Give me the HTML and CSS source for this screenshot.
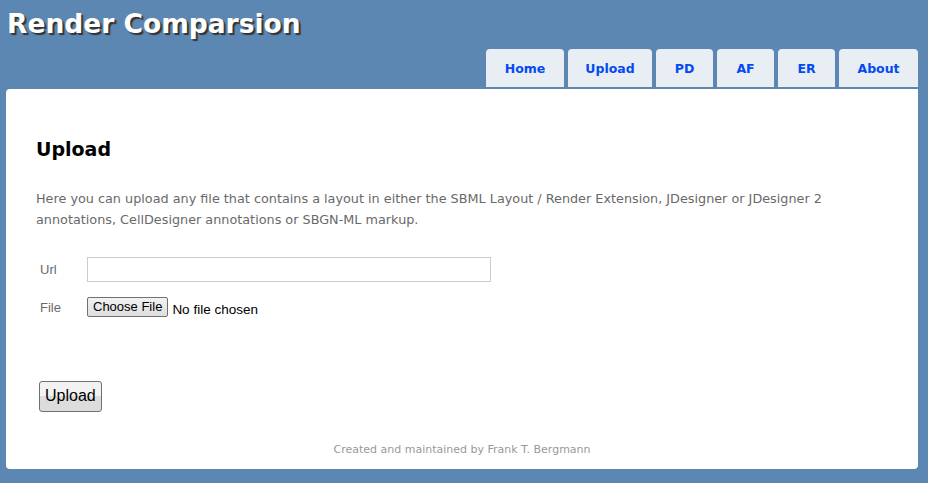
FILE: index.html
```html
<!DOCTYPE html>
<html lang="en">

<head>
    <meta charset="UTF-8">
    <title>Render Comparsion - Upload</title>
    <link rel="stylesheet" href="styles.css">
</head>

<body>
    <div class="page">
        <header class="header">
            <h1 class="title">Render Comparsion</h1>
            <ul class="menu">
                <li><a href="#">Home</a></li>
                <li><a href="#">Upload</a></li>
                <li><a href="#">PD</a></li>
                <li><a href="#">AF</a></li>
                <li><a href="#">ER</a></li>
                <li><a href="#">About</a></li>
            </ul>
        </header>

        <section class="main">
            <h2>Upload</h2>
            <p class="intro">Here you can upload any file that contains a layout in either the SBML Layout / Render Extension, JDesigner or JDesigner 2 annotations, CellDesigner annotations or SBGN-ML markup.</p>

            <form class="upload-form">
                <div class="row">
                    <label class="label" for="url">Url</label>
                    <input class="url-input" type="text" id="url" name="url">
                </div>
                <div class="row">
                    <label class="label" for="file">File</label>
                    <span class="file-field">
                        <button type="button" class="file-btn">Choose File</button>
                        <span class="file-name">No file chosen</span>
                    </span>
                </div>
                <button type="submit" class="submit-btn">Upload</button>
            </form>

            <footer class="footer">Created and maintained by Frank T. Bergmann</footer>
        </section>
    </div>
</body>

</html>
```

FILE: styles.css
```css
body {
    background-color: #5c87b2;
    font-family: "DejaVu Sans", Verdana, sans-serif;
    font-size: 13px;
    color: #696969;
    margin: 0;
    padding: 0;
}

.page {
    margin: 0 10px 0 6px;
}

/* header: title on top, tabs aligned right */
.header {
    display: flex;
    flex-direction: column;
}

.title {
    margin: 0;
    padding: 7px 0 0 1px;
    height: 42px;
    line-height: 34px;
    font-size: 26.5px;
    font-weight: bold;
    color: #fff;
    text-shadow: 2px 2px 1px #333;
}

.menu {
    list-style: none;
    margin: 0 0 2px 0;
    padding: 0;
    display: flex;
    justify-content: flex-end;
    gap: 4px;
}

.menu a {
    display: block;
    height: 38px;
    line-height: 40px;
    text-align: center;
    background-color: #e8eef4;
    color: #034af3;
    font-weight: bold;
    font-size: 12.5px;
    text-decoration: none;
    border-radius: 4px 4px 0 0;
}

.menu li:nth-child(1) a { width: 78px; }
.menu li:nth-child(2) a { width: 84px; }
.menu li:nth-child(3) a { width: 57px; }
.menu li:nth-child(4) a { width: 57px; }
.menu li:nth-child(5) a { width: 57px; }
.menu li:nth-child(6) a { width: 79px; }

.main {
    background-color: #fff;
    border-radius: 4px 0 4px 4px;
    padding: 49px 30px 9px 30px;
    height: 322px;
}

.main h2 {
    margin: 0;
    font-size: 19px;
    font-weight: bold;
    color: #000;
}

.intro {
    margin: 28px 0 0 0;
    line-height: 21px;
    font-size: 12.8px;
}

.upload-form {
    margin-top: 27px;
    padding-left: 4px;
}

.row {
    display: flex;
    align-items: center;
    margin-bottom: 15px;
}

.label {
    width: 47px;
    font-family: "Liberation Sans", Arial, sans-serif;
    font-size: 13px;
    color: #696969;
}

.url-input {
    width: 400px;
    height: 21px;
    border: 1px solid #ccc;
    padding: 1px;
    margin: 0;
}

.file-field {
    display: flex;
    align-items: center;
    gap: 4px;
    font-family: "Liberation Sans", Arial, sans-serif;
    font-size: 13.5px;
    color: #000;
}

.file-btn {
    font-family: "Liberation Sans", Arial, sans-serif;
    font-size: 13px;
    padding: 1px 5px 2px;
    border: 1px solid #707070;
    border-radius: 2px;
    background: linear-gradient(#f2f2f2, #dedede);
    color: #000;
}

.file-name {
    margin-top: 4px;
}

.submit-btn {
    margin: 49px 0 0 -1px;
    font-family: "Liberation Sans", Arial, sans-serif;
    font-size: 16px;
    padding: 5px 5px 6px;
    border: 1px solid #707070;
    border-radius: 3px;
    background: linear-gradient(#f2f2f2 50%, #dcdcdc 50%);
    color: #000;
}

.footer {
    margin-top: 31px;
    text-align: center;
    color: #999;
    font-size: 11px;
}
```
